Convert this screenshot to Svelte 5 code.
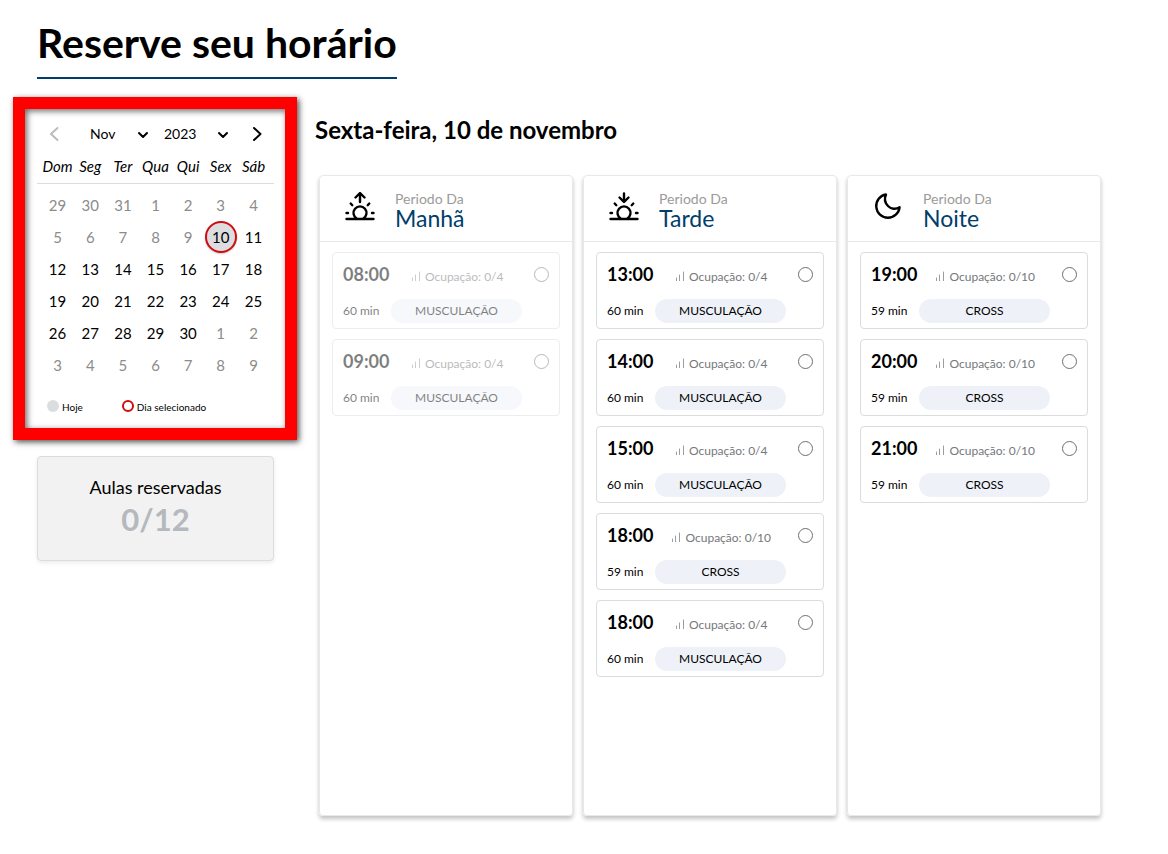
<script lang="ts">
	type Slot = {
		time: string;
		taken: number;
		capacity: number;
		duration: number;
		activity: string;
		disabled?: boolean;
	};

	type Period = {
		name: string;
		icon: 'sunrise' | 'sunset' | 'moon';
		slots: Slot[];
	};

	const months = ['Jan', 'Fev', 'Mar', 'Abr', 'Mai', 'Jun', 'Jul', 'Ago', 'Set', 'Out', 'Nov', 'Dez'];
	const years = [2023, 2024];
	const weekDays = ['Dom', 'Seg', 'Ter', 'Qua', 'Qui', 'Sex', 'Sáb'];
	const today = new Date(2023, 10, 10);

	let month = $state(10);
	let year = $state(2023);
	let selected = $state(new Date(2023, 10, 10));
	let chosenSlot = $state('');

	let weeks = $derived.by(() => {
		const offset = new Date(year, month, 1).getDay();
		const rows: Date[][] = [];
		for (let w = 0; w < 6; w++) {
			rows.push(weekDays.map((_, d) => new Date(year, month, 1 - offset + w * 7 + d)));
		}
		return rows;
	});

	let isFirstMonth = $derived(year === today.getFullYear() && month === today.getMonth());

	function isDisabled(day: Date) {
		return day.getMonth() !== month || day < today;
	}

	function moveMonth(step: number) {
		const next = new Date(year, month + step, 1);
		month = next.getMonth();
		year = next.getFullYear();
	}

	const musculacao = { taken: 0, capacity: 4, duration: 60, activity: 'MUSCULAÇÃO' };
	const cross = { taken: 0, capacity: 10, duration: 59, activity: 'CROSS' };

	const periods: Period[] = [
		{
			name: 'Manhã',
			icon: 'sunrise',
			slots: [
				{ time: '08:00', ...musculacao, disabled: true },
				{ time: '09:00', ...musculacao, disabled: true }
			]
		},
		{
			name: 'Tarde',
			icon: 'sunset',
			slots: [
				{ time: '13:00', ...musculacao },
				{ time: '14:00', ...musculacao },
				{ time: '15:00', ...musculacao },
				{ time: '18:00', ...cross },
				{ time: '18:00', ...musculacao }
			]
		},
		{
			name: 'Noite',
			icon: 'moon',
			slots: [
				{ time: '19:00', ...cross },
				{ time: '20:00', ...cross },
				{ time: '21:00', ...cross }
			]
		}
	];
</script>

<div class="page">
	<header>
		<h1>Reserve seu horário</h1>
	</header>

	<div class="content">
		<aside>
			<section class="calendar">
				<div class="calendar-nav">
					<button class="arrow prev" aria-label="Mês anterior" disabled={isFirstMonth} onclick={() => moveMonth(-1)}>
						<svg width="10" height="16" viewBox="0 0 10 16"><path d="M8.500 2 2 8l6.500 6" /></svg>
					</button>
					<div class="picker">
						<select aria-label="Mês" bind:value={month}>
							{#each months as name, i}
								<option value={i}>{name}</option>
							{/each}
						</select>
						<svg width="10" height="8" viewBox="0 0 10 8"><path d="m1 2 4 4 4-4" /></svg>
					</div>
					<div class="picker year">
						<select aria-label="Ano" bind:value={year}>
							{#each years as value}
								<option {value}>{value}</option>
							{/each}
						</select>
						<svg width="10" height="8" viewBox="0 0 10 8"><path d="m1 2 4 4 4-4" /></svg>
					</div>
					<button class="arrow next" aria-label="Próximo mês" onclick={() => moveMonth(1)}>
						<svg width="10" height="16" viewBox="0 0 10 16"><path d="M2 2l6.500 6L2 14" /></svg>
					</button>
				</div>

				<table>
					<thead>
						<tr>
							{#each weekDays as name}
								<th>{name}</th>
							{/each}
						</tr>
					</thead>
					<tbody>
						{#each weeks as week}
							<tr>
								{#each week as day}
									<td>
										<button
											class="day"
											class:today={+day === +today}
											class:selected={+day === +selected}
											disabled={isDisabled(day)}
											onclick={() => (selected = day)}
										>
											{day.getDate()}
										</button>
									</td>
								{/each}
							</tr>
						{/each}
					</tbody>
				</table>

				<div class="legend">
					<span><i class="dot"></i>Hoje</span>
					<span><i class="dot ring"></i>Dia selecionado</span>
				</div>
			</section>

			<section class="booked">
				<p>Aulas reservadas</p>
				<strong>0/12</strong>
			</section>
		</aside>

		<main>
			<h2>Sexta-feira, 10 de novembro</h2>

			<div class="periods">
				{#each periods as period}
					<section class="period">
						<div class="period-header">
							<svg class="period-icon" width="32" height="32" viewBox="0 0 32 32">
								{#if period.icon === 'moon'}
									<path
										d="M14 2.500A11.700 11.700 0 1 0 27.600 15.100C24 17.700 19 17.200 16 14 12.800 10.700 12.300 6.200 14 2.500z"
									/>
								{:else}
									<path
										d="M2.500 27h27M12.700 26.500a6.500 6.500 0 1 1 6.600 0M2.500 21h1.500M28 21h1.500M6.700 11.500l1.600 1.700M25.300 11.500l-1.600 1.700"
									/>
									{#if period.icon === 'sunrise'}
										<path d="M16 10V1.500M11.500 5.500l4.500-4.500 4.500 4.500" />
									{:else}
										<path d="M16 1.500V9M11.500 5.500l4.500 4.500 4.500-4.500" />
									{/if}
								{/if}
							</svg>
							<div>
								<small>Periodo Da</small>
								<h3>{period.name}</h3>
							</div>
						</div>

						<div class="slots">
							{#each period.slots as slot, i}
								<label class="slot" class:disabled={slot.disabled}>
									<span class="row">
										<b>{slot.time}</b>
										<span class="occupancy">
											<svg width="10" height="10" viewBox="0 0 10 10">
												<path d="M1.500 7v3M4.500 4v6M8.500 1v9" />
											</svg>
											Ocupação: {slot.taken}/{slot.capacity}
										</span>
										<input
											type="radio"
											name="slot"
											value={period.name + i}
											disabled={slot.disabled}
											bind:group={chosenSlot}
										/>
									</span>
									<span class="row bottom">
										<span class="duration">{slot.duration} min</span>
										<span class="activity">{slot.activity}</span>
									</span>
								</label>
							{/each}
						</div>
					</section>
				{/each}
			</div>
		</main>
	</div>
</div>

<style>
	:global(body) {
		margin: 0;
		background: #fff;
	}

	.page {
		display: flex;
		flex-direction: column;
		box-sizing: border-box;
		min-height: 100vh;
		padding: 15px 67px 38px 37px;
		font-family: Lato, 'Open Sans', sans-serif;
		color: #000;
	}

	.page * {
		box-sizing: border-box;
	}

	h1,
	h2,
	h3,
	p {
		margin: 0;
	}

	button,
	select {
		padding: 0;
		border: none;
		background: none;
		font: inherit;
		color: inherit;
		cursor: pointer;
	}

	svg {
		fill: none;
		stroke: currentColor;
		stroke-width: 2;
		stroke-linecap: round;
		stroke-linejoin: round;
	}

	header {
		display: flex;
	}

	h1 {
		padding-bottom: 6px;
		border-bottom: 2px solid #003e6b;
		font-size: 41px;
		font-weight: 700;
		line-height: 56px;
	}

	.content {
		display: flex;
		flex: 1;
		gap: 41px;
		padding-top: 30px;
	}

	aside {
		flex: 0 0 237px;
	}

	.calendar {
		position: relative;
		height: 318px;
	}

	/* highlight frame drawn round the calendar */
	.calendar::after {
		content: '';
		position: absolute;
		inset: -12px -23px -13px -24px;
		border: 12px solid #f00;
		box-shadow:
			2px 2px 6px rgba(0, 0, 0, 0.7),
			inset 2px 2px 6px rgba(0, 0, 0, 0.6);
		pointer-events: none;
	}

	.calendar-nav {
		display: flex;
		align-items: center;
		gap: 16px;
		height: 49px;
		padding: 0 12px;
		font-size: 14px;
	}

	.arrow {
		display: flex;
	}

	.arrow.prev {
		padding-right: 15px;
	}

	.arrow.next {
		padding-left: 8px;
	}

	.arrow:disabled {
		color: #bbb;
	}

	.picker {
		position: relative;
		width: 58px;
	}

	.picker.year {
		width: 64px;
	}

	.picker select {
		width: 100%;
		appearance: none;
	}

	.picker svg {
		position: absolute;
		top: 6px;
		right: 0;
		pointer-events: none;
	}

	table {
		width: 100%;
		border-collapse: collapse;
		table-layout: fixed;
	}

	thead {
		border-bottom: 1px solid #dcdcdc;
	}

	th {
		height: 25px;
		padding: 0 0 8px;
		font-size: 15px;
		font-style: italic;
		font-weight: 400;
		line-height: 16px;
	}

	th:first-child,
	th:last-child {
		width: 37px;
	}

	td {
		height: 32px;
		padding: 0;
		text-align: center;
	}

	th:first-child,
	td:first-child {
		padding-left: 4px;
	}

	th:last-child,
	td:last-child {
		padding-right: 4px;
	}

	tbody tr:first-child td {
		height: 37px;
		padding-top: 5px;
	}

	.day {
		width: 32px;
		height: 32px;
		border-radius: 50%;
		font-size: 15px;
		line-height: 28px;
	}

	.day:disabled {
		color: #8c8c8c;
		cursor: default;
	}

	.day.today {
		background: #dcddde;
	}

	.day.selected {
		border: 2px solid #d00b12;
		box-shadow: 0 1px 2px rgba(0, 0, 0, 0.2);
	}

	.legend {
		display: flex;
		gap: 39px;
		padding: 19px 10px 0;
		font-size: 10px;
		line-height: 15px;
	}

	.legend span {
		display: flex;
		gap: 3px;
	}

	.dot {
		width: 12px;
		height: 12px;
		border-radius: 50%;
		background: #dcddde;
	}

	.dot.ring {
		border: 2px solid #d00b12;
		background: none;
	}

	.booked {
		margin-top: 29px;
		padding: 18px 0 21px;
		border: 1px solid #dadcde;
		border-radius: 4px;
		background: #f2f2f2;
		box-shadow: 0 2px 4px rgba(0, 0, 0, 0.08);
		text-align: center;
	}

	.booked p {
		font-size: 18px;
		line-height: 24px;
	}

	.booked strong {
		display: block;
		color: #b5b8bc;
		font-size: 31px;
		line-height: 40px;
	}

	main {
		display: flex;
		flex: 1;
		flex-direction: column;
		min-width: 0;
	}

	h2 {
		padding-top: 7px;
		font-size: 24px;
		font-weight: 700;
		line-height: 28px;
	}

	.periods {
		display: grid;
		flex: 1;
		grid-template-columns: repeat(3, minmax(0, 1fr));
		gap: 10px;
		padding: 31px 0 0 4px;
	}

	.period {
		border: 1px solid #e8e8e8;
		border-radius: 4px;
		box-shadow: 0 3px 4px rgba(0, 0, 0, 0.24);
	}

	.period-header {
		display: flex;
		gap: 19px;
		height: 66px;
		padding: 16px 24px 0;
		border-bottom: 1px solid #e8e8e8;
	}

	.period-icon {
		stroke-width: 2.4;
	}

	.period-header small {
		display: block;
		color: #9a9a9a;
		font-size: 14px;
		line-height: 14px;
	}

	h3 {
		color: #003e6b;
		font-size: 23px;
		font-weight: 400;
		line-height: 24px;
	}

	.slots {
		display: flex;
		flex-direction: column;
		gap: 10px;
		padding: 10px 12px;
	}

	.slot {
		display: block;
		height: 77px;
		padding: 9px 10px;
		border: 1px solid #dadcde;
		border-radius: 4px;
		cursor: pointer;
	}

	.slot.disabled {
		opacity: 0.5;
		cursor: default;
	}

	.row {
		display: flex;
		align-items: center;
		justify-content: space-between;
		height: 24px;
	}

	.row b {
		font-size: 18px;
	}

	.occupancy {
		margin-right: 9px;
		padding-top: 4px;
		color: #75787b;
		font-size: 12px;
	}

	.occupancy svg {
		margin-right: 1px;
		stroke: #9a9da1;
		stroke-width: 1;
	}

	.row input {
		width: 15px;
		height: 15px;
		margin: 0;
		border: 1px solid #6c7075;
		border-radius: 50%;
		appearance: none;
	}

	.row input:checked {
		background: #003e6b;
	}

	.row.bottom {
		justify-content: flex-start;
		margin-top: 13px;
		font-size: 12px;
		line-height: 24px;
	}

	.duration {
		width: 48px;
	}

	.activity {
		width: 131px;
		border-radius: 12px;
		background: #eef2f8;
		text-align: center;
	}
</style>
